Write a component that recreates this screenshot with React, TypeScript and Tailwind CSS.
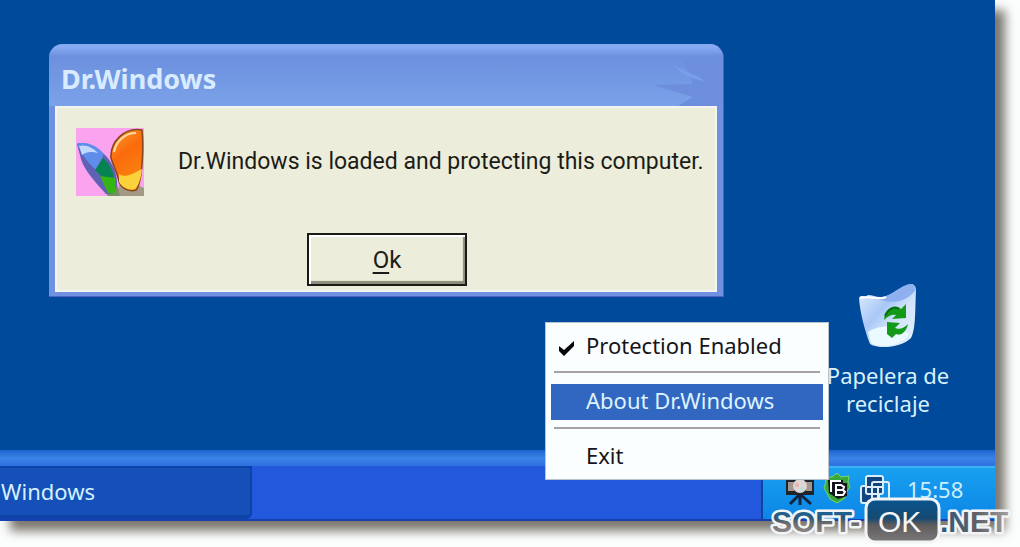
import { FunctionComponent } from "react";

const DialogIcon = () => (
  <svg className="w-[68px] h-[68px] shrink-0" viewBox="0 0 68 68" aria-hidden="true">
    <defs>
      <linearGradient id="orangeWing" x1="0.2" y1="0" x2="0.6" y2="1">
        <stop offset="0" stopColor="#f99a28" />
        <stop offset="0.4" stopColor="#fb6a0c" />
        <stop offset="1" stopColor="#f98a10" />
      </linearGradient>
    </defs>
    <rect width="68" height="68" fill="#fba3ee" />
    <path d="M39 68 C44 60 43 55 45 50 L68 60 V68 Z" fill="#a39a84" />
    <path d="M20 52 L32 68 H44 L40 52 Z" fill="#7b8a6a" />
    <path d="M1 16 C10 13 20 20 28 26 C37 34 42 48 41 58 L37 66 L30 66 C20 55 8 42 5 31 Z" fill="#5f62b4" />
    <path d="M1 15 L10 15 C18 17 23 20 28 26 L20 42 C11 34 6 27 1 15 Z" fill="#5e8eea" />
    <path d="M3 18 C10 16 17 20 22 25 C15 23 10 24 6 27 Z" fill="#c2d8fc" />
    <path d="M27 30 C33 35 37 42 38 50 L26 49 L19 42 Z" fill="#078353" />
    <path d="M24 48 L39 50 C40 57 40 62 38 66 L32 65 Z" fill="#35b511" />
    <path d="M66 2 C48 -1 34 14 35 30 C38 40 42 46 43 54 C46 61 54 64 60 62 C66 56 68 20 66 2 Z" fill="url(#orangeWing)" stroke="#86431f" strokeWidth="1.5" />
    <path d="M43 46 C50 50 54 47 66 41 C65 52 62 58 59 61 C52 63 46 59 43 54 Z" fill="#fcd23b" />
    <path d="M38 24 C40 13 49 5 60 5" stroke="#ffd9a0" strokeWidth="2" fill="none" />
  </svg>
);

const RecycleBin = () => (
  <svg className="w-[60px] h-[66px]" viewBox="0 0 60 66" aria-hidden="true">
    <defs>
      <linearGradient id="bin" x1="0" y1="0" x2="1" y2="1">
        <stop offset="0" stopColor="#e6f2ff" />
        <stop offset="0.4" stopColor="#a9c8f6" />
        <stop offset="0.6" stopColor="#d3e4fb" />
        <stop offset="1" stopColor="#e4f3fb" />
      </linearGradient>
    </defs>
    <path d="M1 15 C3 11 7 15 10 12 C16 12 20 16 28 13 C38 10 44 2 53 1 C56 1 58 3 58 8 C57 26 58 46 53 55 C44 64 22 67 12 61 C7 48 2 30 1 15 Z" fill="url(#bin)" />
    <path d="M20 16 C34 13 42 2 53 1 C56 1 57 3 57 8 C50 16 38 23 20 16 Z" fill="#8fb0ef" />
    <path d="M10 49 C22 41 40 42 51 51 C45 63 22 66 13 60 Z" fill="#eafaff" />
    <path d="M2 15 C14 12 20 18 28 14" stroke="#ffffff" strokeWidth="2" fill="none" />
    <path d="M26 37 C27 25 37 20 43 26 L48 21 L48 35 L34 36 L38 32 C34 31 30 33 26 37 Z" fill="#149a19" />
    <path d="M50 41 C48 50 42 53 38 51 L34 55 L29 51 L29 39 L42 40 L37 45 C42 47 46 45 50 41 Z" fill="#149a19" />
    <path d="M27 33 C30 26 36 23 41 26" stroke="#0a6d12" strokeWidth="2" fill="none" />
  </svg>
);

const CameraTrayIcon = () => (
  <svg className="w-[30px] h-[28px]" viewBox="0 0 30 28" aria-hidden="true">
    <rect x="1" y="2" width="28" height="15" fill="#20242c" />
    <rect x="3" y="4" width="6" height="9" fill="#a3968f" />
    <rect x="21" y="4" width="6" height="9" fill="#a3968f" />
    <circle cx="15" cy="8" r="7" fill="#dcd6d4" />
    <circle cx="12" cy="7" r="2" fill="#f2a9a9" />
    <circle cx="17" cy="11" r="2" fill="#b9dfdc" />
    <path d="M15 16 V27 M14 17 L5 26 M16 17 L26 26" stroke="#14233c" strokeWidth="3" />
  </svg>
);

const ShieldTrayIcon = () => (
  <svg className="w-[28px] h-[32px]" viewBox="0 0 28 32" aria-hidden="true">
    <path d="M14 1 L18 5 L26 4 L25 10 L27 15 L24 19 L22 26 L14 31 L7 27 L4 21 L1 16 L3 10 L2 5 L9 5 Z" fill="#38a83c" stroke="#7ed860" strokeWidth="1" />
    <path d="M5 8 H20 V11 H24 V24 L15 27 L6 21 Z" fill="#15151f" />
    <path d="M8 20 V9 H18" stroke="#ffffff" strokeWidth="2" fill="none" />
    <path d="M12 13 H18 L21 15 L20 18 L22 20 L20 23 H13 V13 M13 18 H20" stroke="#ffffff" strokeWidth="2" fill="none" />
  </svg>
);

const WindowsTrayIcon = () => (
  <svg className="w-[32px] h-[32px]" viewBox="0 0 32 32" fill="none" aria-hidden="true">
    <rect x="2" y="12" width="18" height="17" rx="2" fill="#12447f" stroke="#dcecf8" strokeWidth="2" />
    <rect x="7" y="2" width="17" height="18" rx="2" fill="#12447f" stroke="#dcecf8" strokeWidth="2" />
    <rect x="13" y="8" width="17" height="17" rx="2" stroke="#dcecf8" strokeWidth="2" />
    <path d="M7 13 H24 M19 13 V25" stroke="#dcecf8" strokeWidth="2" />
  </svg>
);

const SiteLogo = () => (
  <svg
    className="absolute right-1 bottom-0.5 w-[250px] h-[50px]"
    viewBox="0 0 250 50"
    fontFamily="'Liberation Sans', Arial, sans-serif"
    role="img"
    aria-label="SOFT-OK.NET"
  >
    <defs>
      <linearGradient id="logoFill" gradientUnits="userSpaceOnUse" x1="0" y1="14" x2="0" y2="38">
        <stop offset="0" stopColor="#17679f" />
        <stop offset="0.4" stopColor="#2c5878" />
        <stop offset="0.6" stopColor="#6f6b6b" />
        <stop offset="1" stopColor="#8c8988" />
      </linearGradient>
      <linearGradient id="logoFillNet" gradientUnits="userSpaceOnUse" x1="175" y1="0" x2="245" y2="0">
        <stop offset="0" stopColor="#2c5a80" />
        <stop offset="0.5" stopColor="#5d6066" />
        <stop offset="1" stopColor="#a5a3a3" />
      </linearGradient>
      <linearGradient id="logoBox" x1="0" y1="0" x2="0" y2="1">
        <stop offset="0" stopColor="#08548f" />
        <stop offset="0.45" stopColor="#164a72" />
        <stop offset="0.6" stopColor="#5d5b5c" />
        <stop offset="1" stopColor="#7b7979" />
      </linearGradient>
    </defs>
    <g fontSize="30" fontWeight="bold" stroke="#f2f4f6" strokeWidth="5" strokeLinejoin="round" paintOrder="stroke">
      <text x="6" y="37" fill="url(#logoFill)">SOFT-</text>
      <text x="174" y="37" fill="url(#logoFillNet)">.NET</text>
    </g>
    <rect x="100" y="4" width="73" height="43" rx="9" fill="url(#logoBox)" stroke="#f2f4f6" strokeWidth="3" />
    <text x="112" y="37" fontSize="30" fill="#f4f6f8">OK</text>
  </svg>
);

const Dialog: FunctionComponent = () => (
  <div
    role="dialog"
    aria-labelledby="dialog-title"
    className="absolute left-[49px] top-[44px] w-[675px] rounded-t-[14px] bg-[#7090e0] px-1.5 pb-1 border-b border-r border-[#5263c4] overflow-hidden"
  >
    <div className="-mx-1.5 h-[62px] px-3 flex items-center bg-linear-to-b from-[#86abf3] from-5% via-[#6d90de] via-20% to-[#7aa2e9] relative">
      <svg className="absolute right-0 top-0 w-[90px] h-full" viewBox="0 0 90 62" aria-hidden="true">
        <path d="M50 14 H90 V62 H45 L60 53 L20 41 L60 40 Z" fill="#6c8edd" />
        <path d="M40 20 C48 31 58 35 72 37 C62 29 52 29 40 20 Z" fill="#7a9dea" />
      </svg>
      <h1
        id="dialog-title"
        className="relative mt-2 font-['Noto_Sans','Open_Sans',sans-serif] text-[27px] leading-8 font-bold text-[#d9ecff]"
      >
        Dr.Windows
      </h1>
    </div>
    <div className="bg-[#ecedda] border-2 border-[#f3f5f2] h-[186px] pt-5 pl-[19px] font-[Roboto,'Liberation_Sans',sans-serif] text-[23px] text-[#1c1c18]">
      <div className="flex items-center gap-[34px]">
        <DialogIcon />
        <p className="whitespace-nowrap">Dr.Windows is loaded and protecting this computer.</p>
      </div>
      <div className="flex mt-[37px] pl-[231px]">
        <button
          type="button"
          className="w-[160px] h-[53px] border-2 border-[#1b1b18] shadow-[inset_2px_2px_0_#ffffff,inset_-2px_-3px_1px_#8b8c7c] text-2xl"
        >
          <span className="underline underline-offset-4">O</span>k
        </button>
      </div>
    </div>
  </div>
);

const TrayMenu: FunctionComponent = () => (
  <div
    role="menu"
    className="absolute left-[545px] top-[322px] w-[284px] h-[158px] bg-[#fbfefe] border border-[#b9c4cc] px-1 flex flex-col font-['Noto_Sans','Open_Sans',sans-serif] text-[22px] leading-8 text-[#15151a]"
  >
    <button
      type="button"
      role="menuitemcheckbox"
      aria-checked="true"
      className="flex h-12 shrink-0 items-center pb-1 text-left"
    >
      <svg className="w-[18px] h-[18px] mt-1 ml-2 mr-2.5" viewBox="0 0 18 18" aria-hidden="true">
        <path d="M1 8 L6 12 L16 3 V8 L6 18 L1 13 Z" fill="#08080a" />
      </svg>
      Protection Enabled
    </button>
    <hr className="mx-1 border-t-2 border-[#a5a3a6]" />
    <button
      type="button"
      role="menuitem"
      className="mt-[11px] mx-px h-9 shrink-0 bg-[#3167c0] pl-[35px] pb-1 text-left text-[#def3ff]"
    >
      About Dr.Windows
    </button>
    <hr className="mx-1 mt-[7px] border-t-2 border-[#a5a3a6]" />
    <button type="button" role="menuitem" className="mt-2.5 pl-9 text-left">
      Exit
    </button>
  </div>
);

const Taskbar: FunctionComponent = () => (
  <footer className="h-[71px] flex flex-col font-['Noto_Sans','Open_Sans',sans-serif] text-[22px]">
    <div className="h-4 bg-linear-to-b from-[#1f63cf] via-[#3a83e6] to-[#2f70df] shrink-0" />
    <div className="flex-1 flex bg-[#2258dc] border-b-2 border-[#173fb0]">
      <button
        type="button"
        className="w-[252px] pl-px text-left text-[#d4f0ff] bg-[#1450b8] rounded-br-md border-t-2 border-r-2 border-b-4 border-[#0d42a6]"
      >
        Windows
      </button>
      <div className="ml-auto w-[234px] pl-[22px] flex items-start gap-2 pt-1 bg-linear-to-b from-[#18a0f0] to-[#0d86e6] border-l-2 border-[#1242a0] border-t-2 border-t-[#39b5f5] text-[#cdeeff]">
        <div className="pt-1.5">
          <CameraTrayIcon />
        </div>
        <ShieldTrayIcon />
        <div className="pt-0.5">
          <WindowsTrayIcon />
        </div>
        <time className="ml-2 leading-[34px]">15:58</time>
      </div>
    </div>
  </footer>
);

export default function App() {
  return (
    <div className="relative h-screen overflow-hidden bg-[#fcfefe] pr-[25px] pb-[26px]">
      <main className="relative h-full flex flex-col bg-[#004a9b] shadow-[10px_10px_10px_rgba(80,72,62,0.75)]">
        <div className="flex-1">
          <a
            href="#papelera"
            className="absolute right-[44px] top-[283px] w-[126px] flex flex-col items-center text-center font-['Noto_Sans','Open_Sans',sans-serif] text-[22px] leading-7 text-[#d8f0fa]"
          >
            <RecycleBin />
            <span className="mt-3 whitespace-nowrap">
              Papelera de
              <br />
              reciclaje
            </span>
          </a>
          <Dialog />
        </div>
        <Taskbar />
        <TrayMenu />
      </main>
      <SiteLogo />
    </div>
  );
}
